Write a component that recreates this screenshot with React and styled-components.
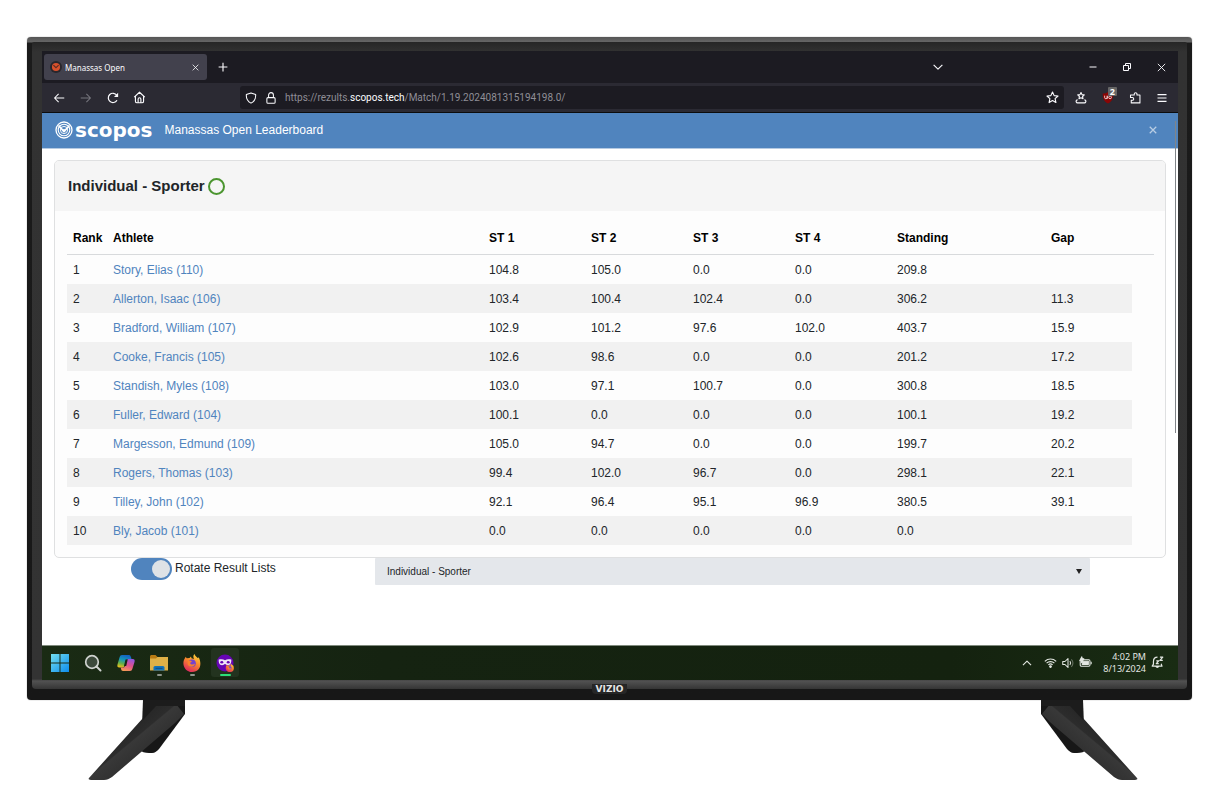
import React, { useState } from "react";
import styled, { createGlobalStyle, css } from "styled-components";

const athletes = [
  { name: "Story, Elias (110)", scores: ["104.8", "105.0", "0.0", "0.0"], standing: "209.8", gap: "" },
  { name: "Allerton, Isaac (106)", scores: ["103.4", "100.4", "102.4", "0.0"], standing: "306.2", gap: "11.3" },
  { name: "Bradford, William (107)", scores: ["102.9", "101.2", "97.6", "102.0"], standing: "403.7", gap: "15.9" },
  { name: "Cooke, Francis (105)", scores: ["102.6", "98.6", "0.0", "0.0"], standing: "201.2", gap: "17.2" },
  { name: "Standish, Myles (108)", scores: ["103.0", "97.1", "100.7", "0.0"], standing: "300.8", gap: "18.5" },
  { name: "Fuller, Edward (104)", scores: ["100.1", "0.0", "0.0", "0.0"], standing: "100.1", gap: "19.2" },
  { name: "Margesson, Edmund (109)", scores: ["105.0", "94.7", "0.0", "0.0"], standing: "199.7", gap: "20.2" },
  { name: "Rogers, Thomas (103)", scores: ["99.4", "102.0", "96.7", "0.0"], standing: "298.1", gap: "22.1" },
  { name: "Tilley, John (102)", scores: ["92.1", "96.4", "95.1", "96.9"], standing: "380.5", gap: "39.1" },
  { name: "Bly, Jacob (101)", scores: ["0.0", "0.0", "0.0", "0.0"], standing: "0.0", gap: "" },
];

// line icons on a 16 unit grid
const Icon = ({ size = 12, weight = 1.4, children }) => (
  <LineIcon width={size} height={size} viewBox="0 0 16 16" strokeWidth={weight} aria-hidden="true">
    {children}
  </LineIcon>
);

const BackIcon = () => <Icon><path d="M15 8H2M7.500 2.500 2 8l5.500 5.500" /></Icon>;
const ForwardIcon = () => <Icon><path d="M1 8h13M8.500 2.500 14 8l-5.500 5.500" /></Icon>;
const ReloadIcon = () => (
  <Icon weight={1.6}>
    <path d="M13.300 11A6.200 6.200 0 1 1 13 4.300" />
    <path d="M14.800 1v5.500H9.300z" fill="currentColor" stroke="none" />
  </Icon>
);
const HomeIcon = () => (
  <Icon size={13}>
    <path d="M1.500 7.500 8 1.500l6.500 6M3 6.500v6a2 2 0 0 0 2 2h6a2 2 0 0 0 2-2v-6M6.300 14V10a1.700 1.700 0 0 1 3.400 0v4" />
  </Icon>
);
const ShieldIcon = () => <Icon><path d="M8 1.200 14.200 3.300c.4 5-1.500 9.200-6.200 11.500C3.300 12.500 1.400 8.300 1.800 3.300z" /></Icon>;
const LockIcon = () => (
  <Icon>
    <rect x="2.500" y="7.500" width="11" height="7.500" rx="1.500" />
    <path d="M4.800 7V4a3.200 3.200 0 0 1 6.400 0v3" />
  </Icon>
);
const StarIcon = () => (
  <Icon size={13}>
    <path d="m8 1.300 2 4.400 4.800.5-3.600 3.200 1 4.800L8 11.800l-4.200 2.400 1-4.800L1.200 6.200 6 5.700z" />
  </Icon>
);
const AccountIcon = () => (
  <Icon weight={1.5}>
    <path d="m8 .8 1.300 2.700 3 .4-2.200 2.100.6 3L8 7.600 5.300 9l.6-3-2.200-2.100 3-.4z" />
    <path d="M3.500 10.500c-1.600 0-2.500 1.500-1.800 2.900.3.700.8 1.100 1.500 1.100h9.600c.7 0 1.200-.4 1.500-1.100.7-1.400-.2-2.900-1.800-2.900" />
  </Icon>
);
const PuzzleIcon = () => (
  <Icon>
    <path d="M7 4V2.800a1.800 1.800 0 0 1 3.600 0V4h4v10.500H3V11h1.500a1.800 1.800 0 0 0 0-3.600H2V4z" />
  </Icon>
);
const MenuIcon = () => <Icon><path d="M2 3.500h12M2 8h12M2 12.500h12" /></Icon>;
const CloseIcon = ({ size = 8, weight = 1.8 }) => (
  <Icon size={size} weight={weight}><path d="m1.500 1.500 13 13M14.500 1.500l-13 13" /></Icon>
);
const PlusIcon = () => <Icon size={10} weight={1.8}><path d="M8 1v14M1 8h14" /></Icon>;
const ChevronIcon = ({ up }) => (
  <Icon size={10} weight={1.8}><path d={up ? "M1.500 11.500 8 5l6.500 6.500" : "M1 4.500 8 11.500l7-7"} /></Icon>
);
const MinimizeIcon = () => <Icon size={8} weight={2}><path d="M1 8h14" /></Icon>;
const RestoreIcon = () => (
  <Icon size={8} weight={2}><path d="M1 5h10v10H1zM5 5V1h10v10h-4" /></Icon>
);
const WifiIcon = () => (
  <Icon size={13} weight={1.4}>
    <path d="M1 6.500a10 10 0 0 1 14 0M3.200 8.800a6.900 6.900 0 0 1 9.600 0M5.400 11a3.800 3.800 0 0 1 5.200 0" />
    <circle cx="8" cy="13" r="1" fill="currentColor" />
  </Icon>
);
const VolumeIcon = () => (
  <Icon weight={1.4}>
    <path d="M1 6h3l4-4v12l-4-4H1z" />
    <path d="M10.500 5.500a4 4 0 0 1 0 5" />
    <path d="M12.500 3a7 7 0 0 1 0 10" opacity="0.400" />
  </Icon>
);
const BatteryIcon = () => (
  <Icon size={13} weight={1.3}>
    <rect x="1.500" y="4.500" width="12" height="8" rx="1.500" />
    <path d="M4 6.500h7.500v4H4z" fill="currentColor" />
    <path d="M15 7v3M3.500 1 1 5.500h2V8l3-4.500H4z" fill="currentColor" />
  </Icon>
);
const BellIcon = () => (
  <Icon size={13} weight={1.5}>
    <path d="M8 1.500C5 1.500 3 3.500 3 7v3L1.500 12.500h12L12.500 9.500M6 13a2 2 0 0 0 3.500 0" />
    <path d="M11 1.500h3.500L11 5.500h3.500M6.500 6h3L6.500 9.500h3" />
  </Icon>
);

const FaviconIcon = () => (
  <svg width="12" height="12" viewBox="0 0 16 16" aria-hidden="true">
    <circle cx="8" cy="8" r="8" fill="#29262c" />
    <circle cx="8" cy="8" r="5.400" fill="#d9512c" />
    <path d="M4.500 5.500 8 9l3.500-3.500" fill="none" stroke="#5c2b24" strokeWidth="1.500" />
  </svg>
);

const BlockerIcon = () => (
  <svg width="12" height="13" viewBox="0 0 16 17" aria-hidden="true">
    <path d="M8 1c2 1.500 4.300 2 7 2 0 7-1.500 10-7 13.500C2.500 13 1 10 1 3c2.700 0 5-.5 7-2z" fill="#8a0505" />
    <path d="M3.500 6v2.500a1.700 1.700 0 0 0 3.400 0V6M7 6.800v3.400M9 8.300a1.800 1.800 0 1 0 3.600 0 1.800 1.800 0 1 0-3.600 0" fill="none" stroke="#fff" strokeWidth="1" />
  </svg>
);

const TargetMark = () => (
  <svg width="18" height="18" viewBox="0 0 18 18" fill="none" stroke="#fff" aria-hidden="true">
    <circle cx="9" cy="9" r="8" strokeWidth="1.300" />
    <circle cx="9" cy="9" r="5.800" strokeWidth="1.100" />
    <circle cx="9" cy="9" r="3.600" strokeWidth="0.900" />
    <path d="m3.500 4.500 5.500 6 5.500-6" strokeWidth="1.800" />
    <circle cx="9" cy="9.500" r="1.500" fill="#fff" stroke="none" />
  </svg>
);

const WindowsIcon = () => (
  <svg width="18" height="18" viewBox="0 0 18 18" aria-hidden="true">
    <defs>
      <linearGradient id="win" gradientUnits="userSpaceOnUse" x1="0" y1="0" x2="18" y2="18">
        <stop offset="0" stopColor="#73dff0" />
        <stop offset="1" stopColor="#0d8ceb" />
      </linearGradient>
    </defs>
    <path d="M0 0h8.500v8.500H0zM9.500 0H18v8.500H9.500zM0 9.500h8.500V18H0zM9.500 9.500H18V18H9.500z" fill="url(#win)" />
  </svg>
);

const SearchIcon = () => (
  <svg width="18" height="18" viewBox="0 0 18 18" aria-hidden="true">
    <circle cx="8" cy="8" r="6.300" fill="#3c4a3b" stroke="#cfd3cf" strokeWidth="1.700" />
    <path d="m12.500 12.500 4 4" stroke="#cfd3cf" strokeWidth="2" strokeLinecap="round" />
  </svg>
);

const CopilotIcon = () => (
  <svg width="18" height="18" viewBox="0 0 18 18" aria-hidden="true">
    <defs>
      <linearGradient id="cpa" x1="0.600" y1="0" x2="0.300" y2="1">
        <stop offset="0" stopColor="#1560c4" />
        <stop offset="0.400" stopColor="#1698b8" />
        <stop offset="0.700" stopColor="#62b04a" />
        <stop offset="1" stopColor="#e8bf1c" />
      </linearGradient>
      <linearGradient id="cpb" x1="0.700" y1="0" x2="0.300" y2="1">
        <stop offset="0" stopColor="#9455dd" />
        <stop offset="0.500" stopColor="#e0508d" />
        <stop offset="1" stopColor="#f59b55" />
      </linearGradient>
    </defs>
    <path d="M5 1h7c1.300 0 1.600 1 2 2.300L14.500 5H11c-1 0-1.500.500-1.900 1.500L7.400 12c-.4 1-.9 1.500-1.900 1.500H2.200C.6 13.500 0 12.200.500 10.500L2.500 3.500C3 1.800 3.700 1 5 1z" fill="url(#cpa)" />
    <path d="M13 17H6c-1.300 0-1.600-1-2-2.300L3.700 13.500H6c1 0 1.500-.5 1.900-1.500L9.600 6.500C10 5.500 10.500 5 11.500 5h4.300c1.600 0 2.200 1.300 1.700 3l-2 6.500c-.5 1.700-1.200 2.500-2.500 2.500z" fill="url(#cpb)" />
    <path d="M8.500 5.500h2.200L9.200 12H7z" fill="#182713" />
  </svg>
);

const FolderIcon = () => (
  <svg width="18" height="18" viewBox="0 0 18 18" aria-hidden="true">
    <path d="M0 2.500C0 1.700.7 1 1.500 1h4L7.500 3H18v5H0z" fill="#b97b13" />
    <path d="M0 4.500h6L7.500 3H18v13.500H0z" fill="#dfb047" />
    <path d="M3.500 13.500a1.500 1.500 0 0 1 1.500-1.500h8a1.500 1.500 0 0 1 1.500 1.500v3h-11z" fill="#1473b8" />
    <path d="M5.500 14.300h7" stroke="#0d4c85" />
  </svg>
);

const FoxShape = () => (
  <g>
    <defs>
      <linearGradient id="fox" x1="0.800" y1="0" x2="0.300" y2="1">
        <stop offset="0" stopColor="#ffd93f" />
        <stop offset="0.450" stopColor="#f9892c" />
        <stop offset="1" stopColor="#dd2560" />
      </linearGradient>
    </defs>
    <path d="M2 4c.3-.7.7-1.100 1-1.300.1.700.3 1.200.8 1.600L6.500 4 8 2.500l.5 1.800L11 5C9.800 2.700 10.500 1 11.500 0c.4 2 2 2.600 3.500 4.300.3-.3.500-.7.500-1.300 3.500 6 2.500 15-6.500 15C2 18-2 10 2 4z" fill="url(#fox)" />
    <circle cx="9" cy="9.200" r="3.800" fill="#7542cf" />
    <path d="M5 7c1.500-.8 3-.5 4 .5L7 9c1 2 3.500 1.800 5 .5-.5 3-3.500 4-5.800 2.800C4.300 11.300 4.300 9 5 7z" fill="#f8812d" />
  </g>
);

const FirefoxIcon = () => (
  <svg width="18" height="18" viewBox="0 0 18 18" aria-hidden="true"><FoxShape /></svg>
);

const PrivateIcon = () => (
  <svg width="18" height="18" viewBox="0 0 18 18" aria-hidden="true">
    <circle cx="9" cy="9" r="8.500" fill="#6605b4" />
    <path d="M2.700 5.600C5 5 7.500 5.200 9 6.200c1.500-1 4-1.200 6.300-.6.200 3.200-.8 5.700-3.300 5.700-1.600 0-2-1.300-3-1.300s-1.400 1.300-3 1.300c-2.500 0-3.500-2.500-3.300-5.700z" fill="#efe6f7" />
    <ellipse cx="5.800" cy="8.200" rx="1.500" ry="1.300" fill="#6605b4" />
    <ellipse cx="12.200" cy="8.200" rx="1.500" ry="1.300" fill="#6605b4" />
    <g transform="translate(9.500 9.500) scale(0.480)"><FoxShape /></g>
  </svg>
);

const Leg = ({ flip }) => (
  <svg width="98" height="82" viewBox="0 0 98 82" aria-hidden="true">
    <defs>
      <linearGradient id="arm" gradientUnits="userSpaceOnUse" x1="40" y1="24" x2="60" y2="48">
        <stop offset="0" stopColor="#262626" />
        <stop offset="0.480" stopColor="#2c2c2c" />
        <stop offset="0.520" stopColor="#383838" />
        <stop offset="1" stopColor="#313131" />
      </linearGradient>
    </defs>
    <g transform={flip ? "translate(98 0) scale(-1 1)" : undefined}>
      <path d="M55 0h42v14L71 49c-2 2-4 4-7 4-4 0-8 0-11-2z" fill="#171717" />
      <path d="M55 18 71 2l17 2 8 10-9 9L24 77c-3 2-5 3-8 3H3c-2 0-3-1-2-2z" fill="url(#arm)" />
      <path d="M55 0h42v6H68L55 20z" fill="#1c1c1c" />
    </g>
  </svg>
);

const Leaderboard = () => (
  <Table>
    <colgroup>
      <Col width="40px" />
      <Col />
      <Col width="102px" />
      <Col width="102px" />
      <Col width="102px" />
      <Col width="102px" />
      <Col width="154px" />
      <Col width="87px" />
      <Col width="22px" />
    </colgroup>
    <thead>
      <tr>
        {["Rank", "Athlete", "ST 1", "ST 2", "ST 3", "ST 4", "Standing", "Gap"].map((title) => (
          <HeadCell key={title} scope="col">{title}</HeadCell>
        ))}
        <HeadCell as="td" />
      </tr>
    </thead>
    <tbody>
      {athletes.map((athlete, index) => (
        <Row key={athlete.name}>
          <Cell>{index + 1}</Cell>
          <Cell><AthleteLink href="#athlete">{athlete.name}</AthleteLink></Cell>
          {athlete.scores.map((score, i) => (
            <Cell key={i}>{score}</Cell>
          ))}
          <Cell>{athlete.standing}</Cell>
          <Cell>{athlete.gap}</Cell>
        </Row>
      ))}
    </tbody>
  </Table>
);

const App = () => {
  const [rotate, setRotate] = useState(true);

  return (
    <Room>
      <GlobalStyle />
      <Television>
        <Bezel>
          <Screen>
            <TabStrip>
              <Tab>
                <FaviconIcon />
                <TabTitle>Manassas Open</TabTitle>
                <IconButton aria-label="Close tab" $width={20}><CloseIcon size={7} /></IconButton>
              </Tab>
              <IconButton aria-label="New tab" $width={32}><PlusIcon /></IconButton>
              <WindowControls>
                <ListTabs aria-label="List all tabs" $width={27}><ChevronIcon /></ListTabs>
                <IconButton aria-label="Minimize" $width={34}><MinimizeIcon /></IconButton>
                <IconButton aria-label="Restore" $width={34}><RestoreIcon /></IconButton>
                <IconButton aria-label="Close" $width={34}><CloseIcon size={9} weight={1.6} /></IconButton>
              </WindowControls>
            </TabStrip>

            <Toolbar>
              <IconButton aria-label="Back"><BackIcon /></IconButton>
              <IconButton aria-label="Forward" $dim><ForwardIcon /></IconButton>
              <IconButton aria-label="Reload"><ReloadIcon /></IconButton>
              <IconButton aria-label="Home"><HomeIcon /></IconButton>
              <AddressBar>
                <ShieldIcon />
                <LockIcon />
                <Address role="textbox" aria-label="Address" contentEditable suppressContentEditableWarning>
                  https://rezults.<Domain>scopos.tech</Domain>/Match/1.19.2024081315194198.0/
                </Address>
                <StarIcon />
              </AddressBar>
              <IconButton aria-label="Account"><AccountIcon /></IconButton>
              <IconButton aria-label="Content blocker">
                <BlockerIcon />
                <Badge>2</Badge>
              </IconButton>
              <IconButton aria-label="Extensions"><PuzzleIcon /></IconButton>
              <IconButton aria-label="Menu"><MenuIcon /></IconButton>
            </Toolbar>

            <Page>
              <Banner>
                <Brand href="#home"><TargetMark />scopos</Brand>
                <BannerTitle>Manassas Open Leaderboard</BannerTitle>
                <Dismiss aria-label="Dismiss" $width={26}><CloseIcon weight={2.5} /></Dismiss>
              </Banner>
              <Card>
                <CardHeader>
                  <CardTitle>Individual - Sporter</CardTitle>
                  <StatusRing />
                </CardHeader>
                <CardBody>
                  <Leaderboard />
                </CardBody>
              </Card>
              <Controls>
                <ToggleLabel>
                  <Toggle type="checkbox" checked={rotate} onChange={() => setRotate(!rotate)} />
                  Rotate Result Lists
                </ToggleLabel>
                <SelectBox>
                  <Select aria-label="Result list">
                    <option>Individual - Sporter</option>
                  </Select>
                  <Caret width="6" height="5" viewBox="0 0 6 5" aria-hidden="true">
                    <path d="M0 0h6L3 5z" fill="#222" />
                  </Caret>
                </SelectBox>
              </Controls>
              <ScrollThumb />
            </Page>

            <Taskbar>
              <TaskButton aria-label="Start"><WindowsIcon /></TaskButton>
              <TaskButton aria-label="Search"><SearchIcon /></TaskButton>
              <TaskButton aria-label="Copilot"><CopilotIcon /></TaskButton>
              <TaskButton aria-label="File Explorer" $running><FolderIcon /></TaskButton>
              <TaskButton aria-label="Firefox" $running><FirefoxIcon /></TaskButton>
              <TaskButton aria-label="Firefox private browsing" $running $active><PrivateIcon /></TaskButton>
              <Tray>
                <ChevronIcon up />
                <TrayStatus>
                  <WifiIcon />
                  <VolumeIcon />
                  <BatteryIcon />
                </TrayStatus>
                <Clock>
                  <span>4:02 PM</span>
                  <span>8/13/2024</span>
                </Clock>
                <BellIcon />
              </Tray>
            </Taskbar>
          </Screen>
        </Bezel>
        <Maker>
          <MakerPlate>VIZIO</MakerPlate>
        </Maker>
      </Television>
      <Legs>
        <Leg />
        <Leg flip />
      </Legs>
    </Room>
  );
};

const GlobalStyle = createGlobalStyle`
  *, *::before, *::after {
    box-sizing: border-box;
  }
  body {
    margin: 0;
    background: #fff;
    font-family: "Liberation Sans", Arial, sans-serif;
    font-size: 12px;
    color: #212529;
  }
  svg {
    display: block;
    flex: none;
  }
`;

const LineIcon = styled.svg`
  fill: none;
  stroke: currentColor;
  stroke-linejoin: round;
`;

const Room = styled.div`
  padding: 37px 31px 20px 27px;
`;

const Television = styled.div`
  padding: 5px 5px 0;
  border-radius: 4px;
  background: linear-gradient(#555 0, #666 5px, #1b1b1b 6px, #171717 100%);
  box-shadow: 0 0 1px #555;
`;

const Bezel = styled.div`
  padding: 9px 9px 9px 10px;
  border-radius: 2px 2px 4px 4px;
  background: linear-gradient(
    #262626 0,
    #323232 10px,
    #333 calc(100% - 10px),
    #525252 calc(100% - 8px),
    #353535 100%
  );
`;

const Screen = styled.div`
  background: #fff;
`;

const TabStrip = styled.div`
  height: 32px;
  padding-left: 2px;
  display: flex;
  align-items: center;
  background: #1c1b22;
  color: #fbfbfe;
`;

const Tab = styled.div`
  width: 163px;
  height: 26px;
  padding: 0 2px 0 6px;
  display: flex;
  align-items: center;
  border-radius: 3px;
  background: #42414d;
`;

const TabTitle = styled.span`
  flex: 1;
  padding-left: 3px;
  font-family: "Noto Sans", sans-serif;
  font-size: 8px;
`;

const WindowControls = styled.div`
  margin-left: auto;
  display: flex;
`;

const IconButton = styled.button`
  position: relative;
  width: ${(props) => props.$width || 27}px;
  height: 24px;
  padding: 0;
  flex: none;
  display: flex;
  align-items: center;
  justify-content: center;
  border: 0;
  background: none;
  color: ${(props) => (props.$dim ? "#77767e" : "#fbfbfe")};
`;

const ListTabs = styled(IconButton)`
  margin-right: 125px;
`;

const Badge = styled.span`
  position: absolute;
  top: 1px;
  right: 4px;
  padding: 0 2px;
  border-radius: 1px;
  background: #666;
  color: #fff;
  font: bold 9px/9px "Noto Sans", sans-serif;
`;

const Toolbar = styled.div`
  height: 30px;
  padding: 0 3px;
  display: flex;
  align-items: center;
  border-bottom: 1px solid #0c0c0d;
  background: #2b2a33;
`;

const AddressBar = styled.div`
  flex: 1;
  height: 23px;
  margin: 0 3px 0 87px;
  padding: 0 5px;
  display: flex;
  align-items: center;
  gap: 8px;
  border-radius: 3px;
  background: #1c1b22;
  color: #fbfbfe;
`;

const Address = styled.div`
  flex: 1;
  font-family: Roboto, "Noto Sans", sans-serif;
  font-size: 10px;
  color: #8f8e96;
`;

const Domain = styled.span`
  color: #fbfbfe;
`;

const Page = styled.main`
  position: relative;
  padding-bottom: 60px;
`;

const Banner = styled.header`
  height: 36px;
  padding: 0 12px 2px 13px;
  display: flex;
  align-items: center;
  border-bottom: 1px solid #b5cae2;
  background: #5084be;
  color: #fff;
`;

const Brand = styled.a`
  display: flex;
  align-items: center;
  gap: 2px;
  margin-right: 12px;
  color: #fff;
  font: bold 20px/20px "DejaVu Sans", sans-serif;
  text-decoration: none;
`;

const BannerTitle = styled.span`
  flex: 1;
`;

const Dismiss = styled(IconButton)`
  color: #b9cde4;
`;

const Card = styled.section`
  margin: 11px 12px 0;
  border: 1px solid #dfe0e1;
  border-radius: 5px;
  background: #fdfdfd;
`;

const CardHeader = styled.div`
  height: 50px;
  padding: 0 13px;
  display: flex;
  align-items: center;
  gap: 3px;
  border-radius: 4px 4px 0 0;
  background: #f5f5f5;
`;

const CardTitle = styled.h1`
  margin: 0;
  font-size: 15px;
  line-height: 20px;
`;

const StatusRing = styled.span`
  width: 17px;
  height: 17px;
  border: 2px solid #4b952f;
  border-radius: 50%;
`;

const CardBody = styled.div`
  padding: 12px 11px 12px 12px;
`;

const Table = styled.table`
  width: 100%;
  table-layout: fixed;
  border-collapse: separate;
  border-spacing: 0;
`;

const Col = styled.col`
  width: ${(props) => props.width || "auto"};
`;

const HeadCell = styled.th`
  height: 32px;
  padding: 0 6px 2px;
  border-bottom: 1px solid #d8dadc;
  color: #000;
  text-align: left;
`;

const Cell = styled.td`
  height: 29px;
  padding: 0 6px;
`;

const Row = styled.tr`
  &:nth-child(even) ${Cell} {
    background: #f1f1f1;
  }
`;

const AthleteLink = styled.a`
  color: #5084be;
  text-decoration: none;
  &:hover {
    text-decoration: underline;
  }
`;

const Controls = styled.div`
  padding: 0 88px 0 89px;
  display: grid;
  grid-template-columns: 244px 1fr;
`;

const ToggleLabel = styled.label`
  display: flex;
  gap: 3px;
  line-height: 20px;
`;

const Toggle = styled.input`
  appearance: none;
  width: 41px;
  height: 22px;
  margin: 0;
  padding: 2px;
  display: flex;
  justify-content: ${(props) => (props.checked ? "flex-end" : "flex-start")};
  border-radius: 11px;
  background: ${(props) => (props.checked ? "#5084be" : "#adb5bd")};
  &::before {
    content: "";
    width: 18px;
    height: 18px;
    border-radius: 50%;
    background: #dee2e6;
  }
`;

const SelectBox = styled.div`
  display: grid;
  align-items: center;
`;

const Select = styled.select`
  grid-area: 1 / 1;
  appearance: none;
  width: 100%;
  height: 27px;
  padding: 0 12px;
  border: 0;
  border-radius: 1px;
  background: #e4e7eb;
  color: #212529;
  font: 10px "Liberation Sans", Arial, sans-serif;
`;

const Caret = styled.svg`
  grid-area: 1 / 1;
  justify-self: end;
  margin-right: 8px;
  pointer-events: none;
`;

const ScrollThumb = styled.div`
  position: absolute;
  top: 8px;
  right: 2px;
  width: 1px;
  height: 312px;
  background: #808488;
`;

const Taskbar = styled.footer`
  height: 35px;
  padding: 0 14px 1px 4px;
  display: flex;
  align-items: center;
  gap: 5px;
  border-top: 1px solid #7f8a7d;
  background: linear-gradient(90deg, #1a2b14, #152311 30%, #14220f 80%, #192c13);
`;

const TaskButton = styled.button`
  position: relative;
  width: 28px;
  height: 29px;
  padding: 0;
  display: flex;
  align-items: center;
  justify-content: center;
  border: 0;
  border-radius: 3px;
  background: ${(props) => (props.$active ? "#23331f" : "none")};
  ${(props) =>
    props.$running &&
    css`
      &::after {
        content: "";
        position: absolute;
        bottom: 1px;
        width: ${props.$active ? 11 : 5}px;
        height: 2px;
        border-radius: 1px;
        background: ${props.$active ? "#2bdf78" : "#8f968d"};
      }
    `}
`;

const Tray = styled.div`
  margin-left: auto;
  display: flex;
  align-items: center;
  color: #e3e7e2;
`;

const TrayStatus = styled.div`
  margin: 0 11px 0 12px;
  display: flex;
  align-items: center;
  gap: 5px;
`;

const Clock = styled.div`
  margin-right: 5px;
  display: flex;
  flex-direction: column;
  align-items: flex-end;
  font: 9px/12px "Noto Sans", sans-serif;
`;

const Maker = styled.div`
  height: 11px;
  display: flex;
  justify-content: center;
  align-items: flex-start;
`;

const MakerPlate = styled.span`
  margin-top: -5px;
  padding: 0 4px;
  border-radius: 0 0 4px 4px;
  background: #262626;
  color: #e4e4e4;
  font: bold 9px/10px "DejaVu Sans", sans-serif;
`;

const Legs = styled.div`
  padding: 0 54px 0 61px;
  display: flex;
  justify-content: space-between;
`;

export default App;
